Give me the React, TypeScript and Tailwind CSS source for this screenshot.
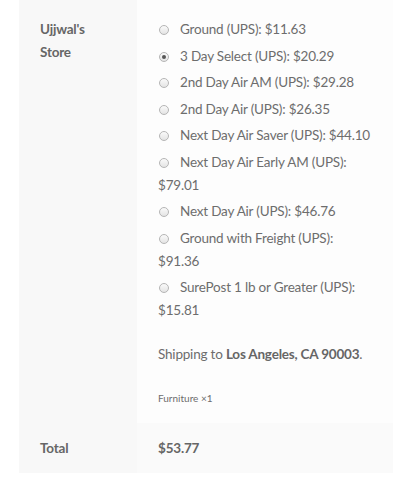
const rates = [
  { label: "Ground (UPS): $11.63" },
  { label: "3 Day Select (UPS): $20.29", checked: true },
  { label: "2nd Day Air AM (UPS): $29.28" },
  { label: "2nd Day Air (UPS): $26.35" },
  { label: "Next Day Air Saver (UPS): $44.10" },
  { label: "Next Day Air Early AM (UPS): $79.01" },
  { label: "Next Day Air (UPS): $46.76" },
  { label: "Ground with Freight (UPS): $91.36" },
  { label: "SurePost 1 lb or Greater (UPS): $15.81" },
];

function Radio({ checked }: { checked?: boolean }) {
  return (
    <span className="relative inline-block w-[10px] h-[10px] rounded-full border border-[#b5b5b5] bg-gradient-to-b from-[#fafafa] to-[#e4e4e4] align-[-1px] mr-[11px] ml-[1px]">
      {checked && (
        <span className="absolute left-[2px] top-[2px] w-[4px] h-[4px] rounded-full bg-[#555]" />
      )}
    </span>
  );
}

export default function App() {
  return (
    <div
      className="w-[416px] h-[484px] bg-white text-[#6d6d6d] text-[13.5px] tracking-[-0.2px]"
      style={{ fontFamily: "'Source Sans Pro', Lato, 'Liberation Sans', sans-serif" }}
    >
      <div className="ml-[19px] w-[374px] grid grid-cols-[118px_1fr]">
        <div className="bg-[#f8f8f8] px-[21px] pt-[18px] leading-[23px] font-bold text-[#666]">
          Ujjwal's
          <br />
          Store
        </div>
        <div className="bg-[#fdfdfd] px-[21px] pt-[18px] pb-[17px]">
          <ul className="flex flex-col gap-[3.5px] leading-[23px]">
            {rates.map((r) => (
              <li key={r.label}>
                <Radio checked={r.checked} />
                {r.label}
              </li>
            ))}
          </ul>
          <p className="mt-[21px] leading-[23px]">
            Shipping to <strong className="font-bold text-[#666]">Los Angeles, CA 90003</strong>.
          </p>
          <p className="mt-[24px] text-[10px] leading-[16px] tracking-normal">Furniture ×1</p>
        </div>
        <div className="bg-[#f8f8f8] px-[21px] py-[13.5px] leading-[23px] font-bold text-[#666]">
          Total
        </div>
        <div className="bg-[#fafafa] px-[21px] py-[13.5px] leading-[23px] font-bold text-[#666]">
          $53.77
        </div>
      </div>
    </div>
  );
}
